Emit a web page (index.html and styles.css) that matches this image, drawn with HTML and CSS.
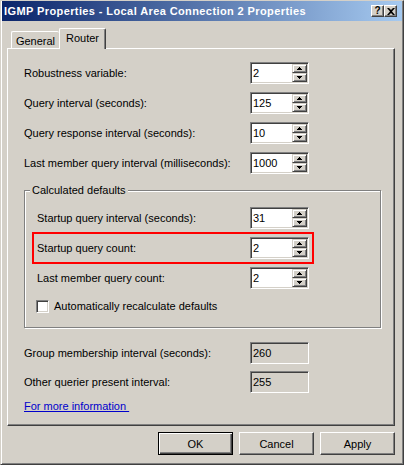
FILE: index.html
```html
<!DOCTYPE html>
<html>
<head>
<meta charset="utf-8">
<title>IGMP Properties</title>
<link rel="stylesheet" href="styles.css">
</head>
<body>
<div class="window">
  <div class="titlebar">
    <span class="title">IGMP Properties - Local Area Connection 2 Properties</span>
    <div class="caption-btns">
      <span class="cap-btn">?</span>
      <span class="cap-btn"><svg width="8" height="7" viewBox="0 0 8 7"><path d="M0 0h2l2 2 2-2h2L5 3.5 8 7H6L4 5 2 7H0l3-3.5z" fill="#000"/></svg></span>
    </div>
  </div>
  <div class="client">
    <div class="tabs">
      <div class="tab">General</div>
      <div class="tab active">Router</div>
    </div>
    <div class="panel">
      <div class="rows">
        <div class="row"><span class="label">Robustness variable:</span>
          <div class="spinner"><span class="value">2</span><span class="spin"><span class="spin-btn"><svg width="5" height="3" viewBox="0 0 5 3"><path d="M2 0h1v1h1v1h1v1H0V2h1V1h1z"/></svg></span><span class="spin-btn"><svg width="5" height="3" viewBox="0 0 5 3"><path d="M0 0h5v1H4v1H3v1H2V2H1V1H0z"/></svg></span></span></div>
        </div>
        <div class="row"><span class="label">Query interval (seconds):</span>
          <div class="spinner"><span class="value">125</span><span class="spin"><span class="spin-btn"><svg width="5" height="3" viewBox="0 0 5 3"><path d="M2 0h1v1h1v1h1v1H0V2h1V1h1z"/></svg></span><span class="spin-btn"><svg width="5" height="3" viewBox="0 0 5 3"><path d="M0 0h5v1H4v1H3v1H2V2H1V1H0z"/></svg></span></span></div>
        </div>
        <div class="row"><span class="label">Query response interval (seconds):</span>
          <div class="spinner"><span class="value">10</span><span class="spin"><span class="spin-btn"><svg width="5" height="3" viewBox="0 0 5 3"><path d="M2 0h1v1h1v1h1v1H0V2h1V1h1z"/></svg></span><span class="spin-btn"><svg width="5" height="3" viewBox="0 0 5 3"><path d="M0 0h5v1H4v1H3v1H2V2H1V1H0z"/></svg></span></span></div>
        </div>
        <div class="row"><span class="label">Last member query interval (milliseconds):</span>
          <div class="spinner"><span class="value">1000</span><span class="spin"><span class="spin-btn"><svg width="5" height="3" viewBox="0 0 5 3"><path d="M2 0h1v1h1v1h1v1H0V2h1V1h1z"/></svg></span><span class="spin-btn"><svg width="5" height="3" viewBox="0 0 5 3"><path d="M0 0h5v1H4v1H3v1H2V2H1V1H0z"/></svg></span></span></div>
        </div>
      </div>

      <div class="group">
        <div class="group-title">Calculated defaults</div>
        <div class="group-body">
          <div class="rows">
            <div class="row row-inner"><span class="label">Startup query interval (seconds):</span>
              <div class="spinner"><span class="value">31</span><span class="spin"><span class="spin-btn"><svg width="5" height="3" viewBox="0 0 5 3"><path d="M2 0h1v1h1v1h1v1H0V2h1V1h1z"/></svg></span><span class="spin-btn"><svg width="5" height="3" viewBox="0 0 5 3"><path d="M0 0h5v1H4v1H3v1H2V2H1V1H0z"/></svg></span></span></div>
            </div>
            <div class="row row-inner highlight"><span class="label">Startup query count:</span>
              <div class="spinner"><span class="value">2</span><span class="spin"><span class="spin-btn"><svg width="5" height="3" viewBox="0 0 5 3"><path d="M2 0h1v1h1v1h1v1H0V2h1V1h1z"/></svg></span><span class="spin-btn"><svg width="5" height="3" viewBox="0 0 5 3"><path d="M0 0h5v1H4v1H3v1H2V2H1V1H0z"/></svg></span></span></div>
            </div>
            <div class="row row-inner"><span class="label">Last member query count:</span>
              <div class="spinner"><span class="value">2</span><span class="spin"><span class="spin-btn"><svg width="5" height="3" viewBox="0 0 5 3"><path d="M2 0h1v1h1v1h1v1H0V2h1V1h1z"/></svg></span><span class="spin-btn"><svg width="5" height="3" viewBox="0 0 5 3"><path d="M0 0h5v1H4v1H3v1H2V2H1V1H0z"/></svg></span></span></div>
            </div>
          </div>
          <div class="check"><span class="checkbox"></span><span>Automatically recalculate defaults</span></div>
        </div>
      </div>

      <div class="rows readonly-rows">
        <div class="row"><span class="label">Group membership interval (seconds):</span><div class="readonly">260</div></div>
        <div class="row"><span class="label">Other querier present interval:</span><div class="readonly">255</div></div>
      </div>

      <a class="link">For more information </a>
    </div>
    <div class="buttons">
      <div class="btn default">OK</div>
      <div class="btn">Cancel</div>
      <div class="btn">Apply</div>
    </div>
  </div>
</div>
</body>
</html>
```

FILE: styles.css
```css
* { box-sizing: border-box; }
html, body { margin: 0; padding: 0; }
body {
  width: 404px;
  height: 465px;
  overflow: hidden;
  background: #D4D0C8;
  font-family: "Liberation Sans", Arial, sans-serif;
  font-size: 11px;
  color: #000;
}
.window {
  width: 404px;
  height: 465px;
  border: 1px solid;
  border-color: #D4D0C8 #404040 #404040 #D4D0C8;
  box-shadow: inset 1px 0 #fff, inset -1px -1px #808080;
  background: #D4D0C8;
}
.titlebar {
  height: 20px;
  margin: 0 1px;
  background: linear-gradient(to right, #0A246A, #A6CAF0);
  display: flex;
  align-items: center;
  justify-content: space-between;
  padding: 0 5px 0 2px;
}
.title {
  color: #fff;
  font-weight: bold;
  font-size: 11px;
  letter-spacing: 0.4px;
  white-space: nowrap;
}
.caption-btns { display: flex; }
.cap-btn {
  width: 13px;
  height: 12px;
  background: #D4D0C8;
  border: 1px solid;
  border-color: #fff #404040 #404040 #fff;
  box-shadow: inset -1px -1px #808080;
  display: flex;
  align-items: center;
  justify-content: center;
  font-weight: bold;
  font-size: 10px;
  line-height: 1;
}
.client { padding: 7px 8px 0 6px; }
.tabs {
  display: flex;
  align-items: flex-end;
  height: 20px;
  padding-left: 4px;
}
.tab {
  height: 17px;
  width: 48px;
  text-align: center;
  padding-top: 3px;
  line-height: 13px;
  border-left: 1px solid #fff;
  border-top: 1px solid #fff;
  border-radius: 2px 2px 0 0;
  background: #D4D0C8;
}
.tab.active {
  width: 47px;
  height: 21px;
  margin-bottom: -1px;
  position: relative;
  z-index: 1;
  border-right: 1px solid #404040;
  box-shadow: inset -1px 0 #808080;
}
.panel {
  height: 378px;
  border-top: 1px solid #fff;
  border-left: 1px solid #fff;
  border-right: 1px solid #404040;
  border-bottom: 1px solid #404040;
  box-shadow: inset -1px -1px #808080;
  padding: 13px 0 0 16px;
}
.rows {
  display: flex;
  flex-direction: column;
  gap: 8px;
}
.row {
  display: grid;
  grid-template-columns: 226px 59px;
  align-items: center;
  width: fit-content;
}
.row-inner { grid-template-columns: 213px 59px; }
.label { white-space: nowrap; }
.highlight { outline: 2px solid #ff0000; outline-offset: 3px; }
.spinner {
  height: 22px;
  width: 59px;
  background: #fff;
  border: 1px solid;
  border-color: #808080 #fff #fff #808080;
  box-shadow: inset 1px 1px #404040, inset -1px -1px #D4D0C8;
  padding: 1px;
  display: flex;
  justify-content: space-between;
}
.value {
  padding-left: 1px;
  line-height: 18px;
}
.spin {
  display: flex;
  flex-direction: column;
  width: 15px;
}
.spin-btn {
  height: 9px;
  background: #D4D0C8;
  border: 1px solid;
  border-color: #D4D0C8 #404040 #404040 #D4D0C8;
  box-shadow: inset 1px 1px #fff, inset -1px -1px #808080;
  display: flex;
  align-items: center;
  justify-content: center;
}
.spin-btn svg { display: block; fill: #000; }
.group {
  margin-top: 16px;
  width: 357px;
  border: 1px solid #808080;
  box-shadow: 1px 1px 0 #fff, inset 1px 1px 0 #fff;
}
.group-title {
  width: fit-content;
  margin: -7px 0 0 5px;
  padding: 0 2px;
  line-height: 13px;
  background: #D4D0C8;
}
.group-body { padding: 10px 0 14px 12px; }
.check {
  display: flex;
  align-items: center;
  gap: 5px;
  margin: 11px 0 0 -1px;
  line-height: 13px;
}
.checkbox {
  width: 13px;
  height: 13px;
  background: #fff;
  border: 1px solid;
  border-color: #808080 #fff #fff #808080;
  box-shadow: inset 1px 1px #404040, inset -1px -1px #D4D0C8;
}
.readonly-rows { margin-top: 14px; gap: 7px; }
.readonly {
  height: 22px;
  width: 59px;
  border: 1px solid;
  border-color: #808080 #fff #fff #808080;
  box-shadow: inset 1px 1px #404040, inset -1px -1px #D4D0C8;
  padding: 1px 2px;
  line-height: 18px;
}
.link {
  display: block;
  width: fit-content;
  margin-top: 7px;
  line-height: 13px;
  color: #0000cc;
  text-decoration: underline;
  white-space: pre;
}
.buttons {
  display: flex;
  justify-content: flex-end;
  gap: 6px;
  margin-top: 6px;
}
.btn {
  width: 75px;
  height: 23px;
  border: 1px solid;
  border-color: #fff #404040 #404040 #fff;
  box-shadow: inset -1px -1px #808080;
  display: flex;
  align-items: center;
  justify-content: center;
}
.btn.default {
  border: 1px solid #000;
  box-shadow: inset 1px 1px #fff, inset -1px -1px #404040, inset -2px -2px #808080;
}
```
